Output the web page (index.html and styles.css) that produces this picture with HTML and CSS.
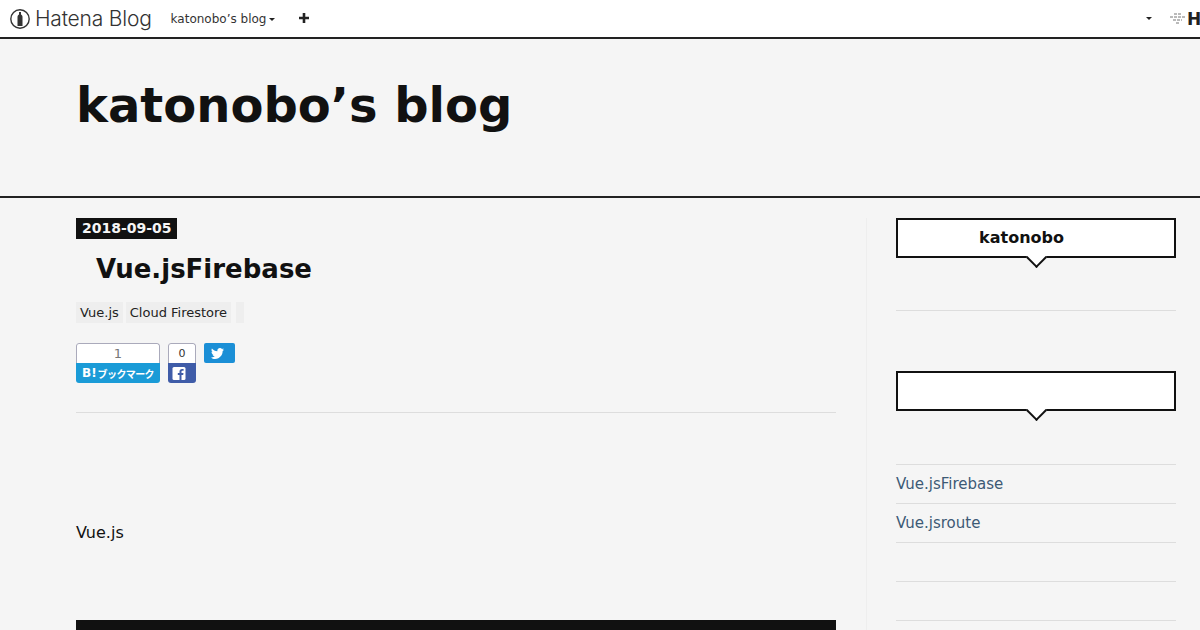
FILE: index.html
```html
<!DOCTYPE html>
<html lang="ja">

<head>
    <meta charset="UTF-8">
    <meta name="viewport" content="width=device-width, initial-scale=1.0">
    <title>katonobo’s blog</title>
    <link rel="stylesheet" href="styles.css">
</head>

<body>
    <div class="navbar">
        <a class="nav-logo">
            <svg class="nav-logo-mark" width="20" height="20" viewBox="0 0 20 20">
                <circle cx="10" cy="10" r="9.200" fill="none" stroke="#333" stroke-width="1.400"/>
                <path d="M9 3h2v2.500c1 .6 1.500 1.400 1.500 2.500V17h-5V8c0-1.100.5-1.900 1.500-2.500z" fill="#333"/>
            </svg>
            <span class="nav-logo-text">Hatena Blog</span>
        </a>
        <a class="nav-blog">katonobo’s blog<span class="caret"></span></a>
        <a class="nav-plus">
            <svg width="10" height="10" viewBox="0 0 10 10"><path d="M5 0v10M0 5h10" stroke="#222" stroke-width="2.600"/></svg>
        </a>
        <div class="nav-right">
            <span class="caret"></span>
            <span class="nav-user">
                <svg width="15" height="11" viewBox="0 0 15 11"><path d="M4 1h7M0 4h15M3 7h9M6 10h3" stroke="#777" stroke-width="1" stroke-dasharray="3 1"/></svg>
                <b>Ho</b>
            </span>
        </div>
    </div>

    <header class="blog-header">
        <h1>katonobo’s blog</h1>
    </header>

    <div class="wrapper">
        <main class="main">
            <div class="date"><span>2018-09-05</span></div>
            <h2 class="entry-title">Vue.jsFirebase</h2>
            <div class="categories">
                <a>Vue.js</a>
                <a>Cloud Firestore</a>
                <a class="empty"></a>
            </div>
            <div class="share">
                <div class="share-box hatena">
                    <div class="count">1</div>
                    <div class="label"><span class="label-b">B!</span>ブックマーク</div>
                </div>
                <div class="share-box facebook">
                    <div class="count">0</div>
                    <div class="label">
                        <svg width="14" height="13" viewBox="0 0 13 13">
                            <rect width="13" height="13" rx="1.500" fill="#fff"/>
                            <path d="M9 13V8h1.700l.3-2H9V4.800c0-.6.2-1 1-1h1.100V2c-.3 0-.9-.1-1.500-.1C8 1.900 7 2.900 7 4.500V6H5.300v2H7v5z" fill="#3f5ca8"/>
                        </svg>
                    </div>
                </div>
                <div class="tweet">
                    <svg width="13" height="11" viewBox="0 0 24 20">
                        <path d="M24 2.400c-.9.400-1.800.7-2.800.8 1-.6 1.800-1.600 2.200-2.700-1 .6-2 1-3.100 1.200C19.300.7 18 0 16.600 0c-2.700 0-4.900 2.200-4.900 4.900 0 .4 0 .8.100 1.100C7.700 5.800 4.100 3.900 1.700.9 1.200 1.600 1 2.500 1 3.400c0 1.700.9 3.200 2.200 4.100-.8 0-1.600-.2-2.200-.6v.1c0 2.400 1.700 4.400 3.900 4.800-.4.100-.8.200-1.300.2-.3 0-.6 0-.9-.1.600 2 2.400 3.400 4.600 3.400-1.700 1.300-3.800 2.100-6.100 2.100-.4 0-.8 0-1.200-.1C2.200 19.300 4.800 20 7.500 20c9.100 0 14-7.500 14-14v-.6c1-.7 1.800-1.600 2.500-3z" fill="#fff"/>
                    </svg>
                </div>
            </div>
            <div class="entry-body">
                <p>Vue.js</p>
                <div class="code-block"></div>
            </div>
        </main>

        <aside class="sidebar">
            <section class="module">
                <div class="module-title"><span class="profile-name">katonobo</span></div>
                <div class="module-line"></div>
            </section>
            <section class="module module-recent">
                <div class="module-title"></div>
                <ul class="recent-list">
                    <li><a>Vue.jsFirebase</a></li>
                    <li><a>Vue.jsroute</a></li>
                    <li></li>
                    <li></li>
                </ul>
            </section>
        </aside>
    </div>
</body>

</html>
```

FILE: styles.css
```css
* {
    margin: 0;
    padding: 0;
    box-sizing: border-box;
}

body {
    font-family: 'DejaVu Sans', sans-serif;
    background-color: #f5f5f5;
    color: #111;
    height: 630px;
    overflow: hidden;
}

.navbar {
    display: flex;
    align-items: center;
    height: 39px;
    background-color: #fff;
    border-bottom: 2px solid #222;
    overflow: hidden;
}

.nav-logo {
    display: flex;
    align-items: center;
    margin-left: 10px;
    color: #333;
}

.nav-logo-text {
    margin-left: 5px;
    font-family: 'Inter', sans-serif;
    font-size: 21px;
    font-weight: 300;
    letter-spacing: -0.2px;
    white-space: nowrap;
}

.nav-blog {
    margin-left: 19px;
    font-size: 12px;
    color: #333;
    white-space: nowrap;
}

.caret {
    display: inline-block;
    margin-left: 3px;
    vertical-align: middle;
    border-top: 3px solid #222;
    border-left: 3px solid transparent;
    border-right: 3px solid transparent;
}

.nav-plus {
    display: flex;
    margin-left: 24px;
    margin-bottom: 1px;
}

.nav-right {
    display: flex;
    align-items: center;
    margin-left: auto;
    gap: 18px;
    flex-shrink: 0;
    width: 54px;
}

.nav-right .caret {
    margin-left: 0;
    flex-shrink: 0;
}

.nav-user {
    display: flex;
    align-items: center;
    gap: 2px;
    font-size: 17px;
    color: #222;
}

.blog-header {
    height: 159px;
    padding: 36px 76px 0;
    border-bottom: 2px solid #222;
}

.blog-header h1 {
    font-size: 48px;
    font-weight: 700;
    line-height: 60px;
    color: #111;
}

.wrapper {
    display: flex;
    padding-left: 76px;
}

.main {
    width: 760px;
    padding-top: 20px;
}

.date {
    display: flex;
}

.date span {
    display: inline-block;
    height: 21px;
    padding: 0 6px;
    background-color: #111;
    color: #f5f5f5;
    font-size: 14px;
    font-weight: 700;
    line-height: 21px;
    width: 101px;
    white-space: nowrap;
}

.entry-title {
    margin-top: 12px;
    padding-left: 20px;
    font-size: 26px;
    font-weight: 700;
    line-height: 36px;
}

.categories {
    display: flex;
    gap: 3px;
    margin-top: 15px;
}

.categories a {
    height: 21px;
    padding: 0 4px;
    background-color: #eee;
    font-size: 13px;
    line-height: 21px;
    color: #222;
}

.categories a.empty {
    width: 8px;
    margin-left: 2px;
    padding: 0;
}

.share {
    display: flex;
    align-items: flex-start;
    gap: 8px;
    margin-top: 20px;
    padding-bottom: 29px;
    border-bottom: 1px solid #ddd;
}

.share-box {
    height: 40px;
    border-radius: 3px;
    overflow: hidden;
}

.share-box .count {
    height: 20px;
    background-color: #fff;
    border: 1px solid #aab;
    border-bottom: none;
    border-radius: 3px 3px 0 0;
    text-align: center;
    line-height: 20px;
}

.share-box .label {
    display: flex;
    align-items: center;
    height: 20px;
    color: #fff;
}

.hatena {
    width: 84px;
}

.hatena .count {
    font-size: 13px;
    color: #777;
}

.hatena .label {
    justify-content: center;
    background-color: #1a9bd7;
    font-family: 'Noto Sans CJK JP', sans-serif;
    font-size: 10px;
    font-weight: 700;
    letter-spacing: -0.6px;
}

.label-b {
    margin-right: 1px;
    font-family: 'DejaVu Sans', sans-serif;
    font-size: 12px;
    letter-spacing: 0;
}

.facebook {
    width: 28px;
}

.facebook .count {
    font-size: 11px;
    color: #333;
}

.facebook .label {
    padding-left: 4px;
    background-color: #3f5ca8;
}

.tweet {
    display: flex;
    align-items: center;
    width: 31px;
    height: 20px;
    padding-left: 7px;
    background-color: #1b8fd6;
    border-radius: 2px;
}

.entry-body p {
    margin-top: 109px;
    font-size: 16px;
    line-height: 22px;
}

.code-block {
    height: 10px;
    margin-top: 76px;
    background-color: #111;
}

.sidebar {
    width: 310px;
    height: 412px;
    margin: 20px 0 0 30px;
    padding-left: 29px;
    border-left: 1px solid #eee;
}

.module-title {
    position: relative;
    display: flex;
    align-items: center;
    justify-content: center;
    width: 280px;
    height: 40px;
    background-color: #fff;
    border: 2px solid #111;
}

/* speech bubble tail */
.module-title::after {
    content: '';
    position: absolute;
    left: 50%;
    bottom: -9px;
    width: 13px;
    height: 13px;
    margin-left: -7.500px;
    background-color: #fff;
    border-right: 2px solid #111;
    border-bottom: 2px solid #111;
    transform: rotate(45deg);
}

.profile-name {
    margin-right: 29px;
    margin-bottom: 1px;
    font-size: 16px;
    font-weight: 700;
}

.module-line {
    width: 280px;
    margin-top: 52px;
    border-top: 1px solid #ddd;
}

.module-recent {
    margin-top: 60px;
}

.recent-list {
    width: 280px;
    margin-top: 53px;
    list-style: none;
    border-top: 1px solid #ddd;
}

.recent-list li {
    height: 39px;
    border-bottom: 1px solid #ddd;
    font-size: 15px;
    line-height: 38px;
    color: #3d5a75;
}
```
